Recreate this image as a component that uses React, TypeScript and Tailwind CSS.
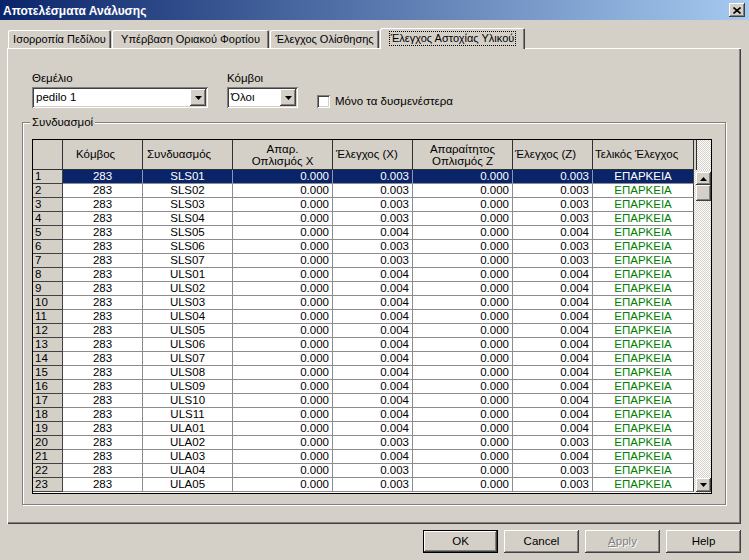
import React from "react";

const RAISED =
  "shadow-[inset_-1px_-1px_0_#404040,inset_1px_1px_0_#ffffff,inset_-2px_-2px_0_#808080,inset_2px_2px_0_#d4d0c8]";
const SUNKEN =
  "shadow-[inset_1px_1px_0_#808080,inset_-1px_-1px_0_#ffffff,inset_2px_2px_0_#404040,inset_-2px_-2px_0_#d4d0c8]";
const HATCH =
  "bg-[repeating-conic-gradient(#d4d0c8_0_25%,#ffffff_0_50%)] bg-[length:2px_2px]";

type Row = [string, string, string];
const rows: Row[] = [
  ["SLS01", "0.003", "0.003"],
  ["SLS02", "0.003", "0.003"],
  ["SLS03", "0.003", "0.003"],
  ["SLS04", "0.003", "0.003"],
  ["SLS05", "0.004", "0.004"],
  ["SLS06", "0.003", "0.003"],
  ["SLS07", "0.003", "0.003"],
  ["ULS01", "0.004", "0.004"],
  ["ULS02", "0.004", "0.004"],
  ["ULS03", "0.004", "0.004"],
  ["ULS04", "0.004", "0.004"],
  ["ULS05", "0.004", "0.004"],
  ["ULS06", "0.004", "0.004"],
  ["ULS07", "0.004", "0.004"],
  ["ULS08", "0.004", "0.004"],
  ["ULS09", "0.004", "0.004"],
  ["ULS10", "0.004", "0.004"],
  ["ULS11", "0.004", "0.004"],
  ["ULA01", "0.004", "0.004"],
  ["ULA02", "0.003", "0.003"],
  ["ULA03", "0.004", "0.004"],
  ["ULA04", "0.003", "0.003"],
  ["ULA05", "0.003", "0.003"],
];

function DownTri() {
  return (
    <svg width="7" height="4" viewBox="0 0 7 4">
      <polygon points="0,0 7,0 3.5,4" fill="#000" />
    </svg>
  );
}
function UpTri() {
  return (
    <svg width="7" height="4" viewBox="0 0 7 4">
      <polygon points="0,4 7,4 3.5,0" fill="#000" />
    </svg>
  );
}

function Combo({ w, text }: { w: string; text: string }) {
  return (
    <div className={`${w} h-[21px] bg-white ${SUNKEN} flex items-center p-[2px]`}>
      <span className="flex-1 pl-[2px] leading-[13px] whitespace-nowrap">{text}</span>
      <div className={`w-[16px] h-[17px] bg-[#d4d0c8] ${RAISED} flex items-center justify-center`}>
        <DownTri />
      </div>
    </div>
  );
}

function Btn({ label, def, disabled }: { label: React.ReactNode; def?: boolean; disabled?: boolean }) {
  return (
    <div
      className={`w-[75px] h-[23px] flex items-center justify-center ${
        def ? "border border-black" : ""
      }`}
    >
      <div
        className={`w-full h-full bg-[#d4d0c8] ${RAISED} flex items-center justify-center ${
          disabled ? "text-[#808080] [text-shadow:1px_1px_0_#ffffff]" : "text-black"
        }`}
      >
        {label}
      </div>
    </div>
  );
}

function Tab({ label, w, selected }: { label: string; w: string; selected?: boolean }) {
  if (selected) {
    return (
      <div
        className={`${w} ml-[1px] h-[21px] -mb-px relative z-10 bg-[#d4d0c8] rounded-t-[2px] shadow-[inset_1px_1px_0_#ffffff,inset_-1px_0_0_#404040,inset_-2px_0_0_#808080] flex items-center justify-center pb-[1px]`}
      >
        <span className="border border-dotted border-black px-[1px] leading-[13px] whitespace-nowrap text-[11px]">{label}</span>
      </div>
    );
  }
  return (
    <div
      className={`${w} ml-[1px] h-[18px] rounded-t-[2px] shadow-[inset_1px_1px_0_#ffffff,inset_-1px_0_0_#404040,inset_-2px_0_0_#808080] flex items-center justify-center pt-[1px]`}
    >
      <span className="leading-[13px] whitespace-nowrap text-[11px]">{label}</span>
    </div>
  );
}

function Grid() {
  return (
    <div className="w-[680px] h-[355px] border border-black flex bg-white">
      <div className="w-[661px] h-full overflow-hidden flex flex-col">
        {/* header */}
        <div className="flex h-[30px] shrink-0 bg-[#d4d0c8] border-b border-[#303030]">
          <div className="w-[30px] shrink-0 border-r border-[#303030]" />
          <div className="w-[80px] shrink-0 border-r border-[#303030] flex items-center pl-[13px]">Κόμβος</div>
          <div className="w-[90px] shrink-0 border-r border-[#303030] flex items-center pl-[4px]">Συνδυασμός</div>
          <div className="w-[100px] shrink-0 border-r border-[#303030] flex flex-col items-center justify-center leading-[12px] pt-[1px]">
            <span>Απαρ.</span>
            <span>Οπλισμός X</span>
          </div>
          <div className="w-[80px] shrink-0 border-r border-[#303030] flex items-center pl-[3px]">Έλεγχος (X)</div>
          <div className="w-[100px] shrink-0 border-r border-[#303030] flex flex-col items-center justify-center leading-[12px] pt-[1px]">
            <span>Απαραίτητος</span>
            <span>Οπλισμός Z</span>
          </div>
          <div className="w-[80px] shrink-0 border-r border-[#303030] flex items-center pl-[2px]">Έλεγχος (Z)</div>
          <div className="w-[101px] shrink-0 border-r border-[#303030] flex items-center pl-[2px]">Τελικός Έλεγχος</div>
        </div>
        {rows.map((r, i) => {
          const sel = i === 0;
          const cell = sel
            ? "shrink-0 h-full border-b border-[#8c8c8c] border-r border-r-[#8e95b8] bg-[#0a246a] text-white leading-[13px]"
            : "shrink-0 h-full border-b border-r border-[#8c8c8c] leading-[13px]";
          return (
            <div key={i} className="flex h-[14px] shrink-0">
              <div className="w-[30px] shrink-0 h-full bg-[#d4d0c8] border-r border-b border-[#404040] pl-[2px] leading-[13px]">
                {i + 1}
              </div>
              <div className={`w-[80px] text-center ${cell}`}>283</div>
              <div className={`w-[90px] text-center ${cell}`}>{r[0]}</div>
              <div className={`w-[100px] text-right pr-[3px] ${cell}`}>0.000</div>
              <div className={`w-[80px] text-right pr-[3px] ${cell}`}>{r[1]}</div>
              <div className={`w-[100px] text-right pr-[3px] ${cell}`}>0.000</div>
              <div className={`w-[80px] text-right pr-[3px] ${cell}`}>{r[2]}</div>
              <div
                className={`w-[101px] shrink-0 h-full text-center leading-[13px] border-b border-[#8c8c8c] border-r border-r-[#404040] ${
                  sel ? "bg-[#0a246a] text-white" : "text-[#008000]"
                }`}
              >
                ΕΠΑΡΚΕΙΑ
              </div>
            </div>
          );
        })}
      </div>
      {/* scrollbar column */}
      <div className="w-[17px] h-full flex flex-col">
        <div className="h-[30px] flex shrink-0">
          <div className="w-[2px] bg-[#d4d0c8]" />
          <div className="w-px bg-[#303030]" />
          <div className={`flex-1 ${HATCH}`} />
        </div>
        <div className={`h-[2px] shrink-0 ${HATCH}`} />
        <div className={`h-[13px] shrink-0 flex ${HATCH}`}>
          <div className="w-[2px]" />
          <div className={`flex-1 bg-[#d4d0c8] ${RAISED} flex items-center justify-center`}>
            <UpTri />
          </div>
        </div>
        <div className={`h-[16px] shrink-0 flex ${HATCH}`}>
          <div className="w-[2px]" />
          <div className={`flex-1 bg-[#d4d0c8] ${RAISED}`} />
        </div>
        <div className={`flex-1 ${HATCH}`} />
        <div className={`h-[14px] shrink-0 flex ${HATCH}`}>
          <div className="w-[2px]" />
          <div className={`flex-1 bg-[#d4d0c8] ${RAISED} flex items-center justify-center`}>
            <DownTri />
          </div>
        </div>
        <div className={`h-px shrink-0 ${HATCH}`} />
      </div>
    </div>
  );
}

export default function App() {
  return (
    <div className="w-[749px] h-[560px] bg-[#d4d0c8] flex flex-col overflow-hidden text-[11.5px] text-black font-['Liberation_Sans',Arial,sans-serif]">
      {/* title bar */}
      <div className="h-[20px] shrink-0 flex items-center justify-between pl-[3px] pr-[4px] bg-[linear-gradient(90deg,#0a246a,#a6caf0)]">
        <span className="text-white font-bold text-[12px] leading-[14px] pt-[1px]">Αποτελέσματα Ανάλυσης</span>
        <div className={`w-[16px] h-[14px] bg-[#d4d0c8] ${RAISED} flex items-center justify-center`}>
          <svg width="8" height="7" viewBox="0 0 8 7">
            <path d="M0.5 0.5 L7.5 6.5 M7.5 0.5 L0.5 6.5" stroke="#000" strokeWidth="1.6" />
          </svg>
        </div>
      </div>

      <div className="pl-[7px] pr-[8px] pt-[8px] flex flex-col">
        {/* tabs */}
        <div className="flex items-end h-[20px]">
          <Tab w="w-[103px]" label="Ισορροπία Πεδίλου" />
          <Tab w="w-[157px]" label="Υπέρβαση Οριακού Φορτίου" />
          <Tab w="w-[109px]" label="Έλεγχος Ολίσθησης" />
          <Tab w="w-[145px]" label="Έλεγχος Αστοχίας Υλικού" selected />
        </div>

        {/* tab panel */}
        <div className="w-[734px] h-[476px] shadow-[inset_1px_1px_0_#ffffff,inset_-1px_-1px_0_#404040,inset_-2px_-2px_0_#808080] pt-[24px] pl-[1px] flex flex-col">
          <div className="flex pl-[24px]">
            <div className="flex flex-col">
              <span className="leading-[13px] h-[13px]">Θεμέλιο</span>
              <div className="mt-[2px]">
                <Combo w="w-[176px]" text="pedilo 1" />
              </div>
            </div>
            <div className="flex flex-col ml-[19px]">
              <span className="leading-[13px] h-[13px]">Κόμβοι</span>
              <div className="mt-[2px]">
                <Combo w="w-[71px]" text="Όλοι" />
              </div>
            </div>
            <div className="flex items-center ml-[19px] mt-[23px] h-[13px]">
              <div className={`w-[13px] h-[13px] bg-white ${SUNKEN}`} />
              <span className="ml-[5px] leading-[13px]">Μόνο τα δυσμενέστερα</span>
            </div>
          </div>

          {/* group box */}
          <div className="relative ml-[14px] mt-[14px] w-[704px] h-[383px] border border-[#808080] shadow-[inset_1px_1px_0_#ffffff,1px_1px_0_#ffffff] pl-[9px] pt-[16px]">
            <span className="absolute -top-[7px] left-[7px] bg-[#d4d0c8] px-[2px] leading-[13px]">Συνδυασμοί</span>
            <Grid />
          </div>
        </div>
      </div>

      {/* buttons */}
      <div className="flex justify-end gap-[6px] pr-[8px] mt-[6px]">
        <Btn label="OK" def />
        <Btn label="Cancel" />
        <Btn
          label={
            <span>
              <span className="underline">A</span>pply
            </span>
          }
          disabled
        />
        <Btn label="Help" />
      </div>
    </div>
  );
}
